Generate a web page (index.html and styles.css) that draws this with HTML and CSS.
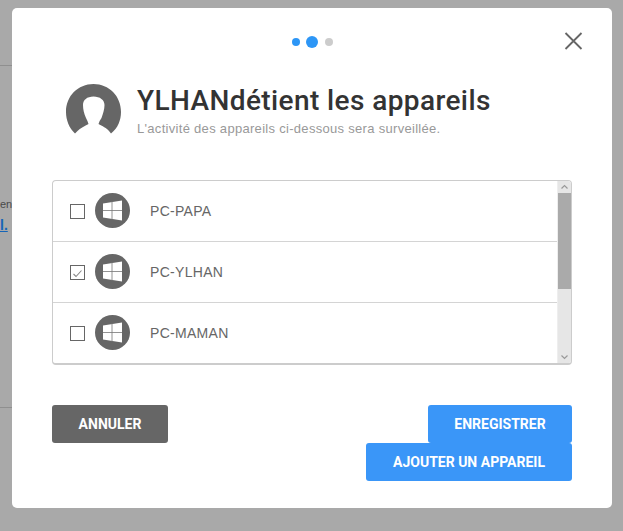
FILE: index.html
```html
<!DOCTYPE html>
<html>
<head>
    <title>Appareils</title>
    <meta name="viewport" content="width=device-width, initial-scale=1">
    <link rel="stylesheet" href="styles.css">
</head>
<body>
    <!-- page behind the overlay, only a sliver shows on the left -->
    <div class="behind">
        <div class="behind-line behind-line-top"></div>
        <div class="behind-text">en</div>
        <div class="behind-link">l.</div>
        <div class="behind-line behind-line-bottom"></div>
    </div>

    <div class="modal">
        <div class="modal-top">
            <div class="steps">
                <span class="dot dot-on"></span>
                <span class="dot dot-big"></span>
                <span class="dot dot-off"></span>
            </div>
            <svg class="close" width="19" height="18" viewBox="0 0 19 18">
                <path d="M1.5 1 L17.5 17 M17.5 1 L1.5 17" stroke="#666" stroke-width="1.8" fill="none"/>
            </svg>
        </div>

        <div class="header">
            <svg class="avatar" width="56" height="52" viewBox="0 0 56 52">
                <path fill="#666" d="M9 49.500 C3 44 0 36 0 28 C0 12 12 0 27.500 0 C43 0 55 12 55 28 C55 36 52 44 45 49.500 L43 47 C41 44 36 42 32.500 40 C33 38 34 36 35.500 34 C37 30 38.500 25 38.500 21 C38.500 16 34 12.500 27.500 12.500 C21 12.500 17 16 17 21 C17 25 18 30 20 34 C21 36 22 38 22.500 40 C19 42 14 44 11.500 47 Z"/>
            </svg>
            <div class="header-text">
                <h1>YLHANdétient les appareils</h1>
                <p>L'activité des appareils ci-dessous sera surveillée.</p>
            </div>
        </div>

        <div class="devices">
            <div class="device-list">
                <div class="device">
                    <span class="check"></span>
                    <svg class="win" width="35" height="35" viewBox="0 0 35 35">
                        <circle cx="17.500" cy="17.500" r="17.500" fill="#666"/>
                        <path fill="#fff" d="M8 10.500 L27 7.500 V27.500 L8 24.500 Z"/>
                        <path stroke="#777" stroke-width="0.800" d="M17 8 V27 M8 17.500 H27"/>
                    </svg>
                    <span class="device-name">PC-PAPA</span>
                </div>
                <div class="device">
                    <span class="check">
                        <svg width="13" height="13" viewBox="0 0 13 13">
                            <path d="M2.500 7 L5 9.500 L10.500 3.500" stroke="#888" stroke-width="1.100" fill="none"/>
                        </svg>
                    </span>
                    <svg class="win" width="35" height="35" viewBox="0 0 35 35">
                        <circle cx="17.500" cy="17.500" r="17.500" fill="#666"/>
                        <path fill="#fff" d="M8 10.500 L27 7.500 V27.500 L8 24.500 Z"/>
                        <path stroke="#777" stroke-width="0.800" d="M17 8 V27 M8 17.500 H27"/>
                    </svg>
                    <span class="device-name">PC-YLHAN</span>
                </div>
                <div class="device">
                    <span class="check"></span>
                    <svg class="win" width="35" height="35" viewBox="0 0 35 35">
                        <circle cx="17.500" cy="17.500" r="17.500" fill="#666"/>
                        <path fill="#fff" d="M8 10.500 L27 7.500 V27.500 L8 24.500 Z"/>
                        <path stroke="#777" stroke-width="0.800" d="M17 8 V27 M8 17.500 H27"/>
                    </svg>
                    <span class="device-name">PC-MAMAN</span>
                </div>
            </div>
            <div class="scrollbar">
                <svg class="arrow" width="13" height="12" viewBox="0 0 13 12">
                    <path d="M3.500 7.500 L6.500 4.500 L9.500 7.500" stroke="#999" stroke-width="1.200" fill="none"/>
                </svg>
                <div class="thumb"></div>
                <div class="track"></div>
                <svg class="arrow" width="13" height="12" viewBox="0 0 13 12">
                    <path d="M3.500 4.500 L6.500 7.500 L9.500 4.500" stroke="#999" stroke-width="1.200" fill="none"/>
                </svg>
            </div>
        </div>

        <div class="actions">
            <button type="button" class="btn btn-grey">ANNULER</button>
            <div class="actions-right">
                <button type="button" class="btn btn-blue btn-save">ENREGISTRER</button>
                <button type="button" class="btn btn-blue btn-add">AJOUTER UN APPAREIL</button>
            </div>
        </div>
    </div>
</body>
</html>
```

FILE: styles.css
```css
html, body { margin: 0; height: 100%; }
body {
    background: #a9a9a9;
    font-family: "Liberation Sans", Arial, sans-serif;
    overflow: hidden;
    padding: 8px 0 0 12px;
    box-sizing: border-box;
}

/* sliver of the page under the overlay */
.behind { position: absolute; left: 0; top: 0; width: 12px; height: 531px; overflow: hidden; }
.behind-line { position: absolute; left: 0; width: 12px; height: 1px; background: #8f8f8f; }
.behind-line-top { top: 65px; }
.behind-line-bottom { top: 407px; }
.behind-text { position: absolute; left: 0; top: 198px; font-size: 11px; color: #4a4a4a; }
.behind-link { position: absolute; left: 0; top: 217px; font-size: 14px; font-weight: bold; color: #1565b8; text-decoration: underline; }

.modal {
    position: relative;
    width: 600px;
    height: 500px;
    background: #fff;
    border-radius: 5px;
}

.modal-top { height: 76px; display: flex; justify-content: center; position: relative; }
.steps { display: flex; align-items: center; gap: 6.500px; height: 67px; }
.dot { display: block; width: 8px; height: 8px; border-radius: 50%; background: #2d96f6; }
.dot-big { width: 12px; height: 12px; }
.dot-off { background: #ccc; }
.close { position: absolute; left: 552px; top: 24px; }

.header { display: flex; gap: 15px; align-items: center; padding-left: 54px; height: 52px; }
.avatar { flex: none; }
h1 {
    margin: 0;
    font-family: Roboto, sans-serif;
    font-weight: 500;
    font-size: 28px;
    line-height: 34px;
    color: #333;
    letter-spacing: 0.4px;
}
.header-text p {
    margin: 3px 0 0 0;
    font-size: 13px;
    line-height: 16px;
    color: #999;
    letter-spacing: 0.3px;
}

.devices {
    display: flex;
    margin: 44px 0 0 40px;
    width: 520px;
    height: 185px;
    box-sizing: border-box;
    border: 1px solid #ccc;
    border-bottom-width: 2px;
    border-radius: 4px;
    overflow: hidden;
}
.device-list { flex: 1; }
.device {
    display: flex;
    align-items: center;
    height: 60px;
    padding-left: 17px;
    border-bottom: 1px solid #d4d4d4;
}
.device:last-child { border-bottom: none; }
.check {
    display: block;
    flex: none;
    width: 13px;
    height: 13px;
    border: 1px solid #666;
    margin-right: 10px;
}
.win { flex: none; margin-top: -2px; }
.device-name { margin-left: 20px; font-size: 14px; color: #666; letter-spacing: 0.3px; }

.scrollbar { display: flex; flex-direction: column; width: 13px; background: #e6e6e6; border-left: 1px solid #eee; }
.arrow { display: block; flex: none; }
.thumb { height: 96px; background: #aaa; }
.track { flex: 1; }

.actions { display: flex; justify-content: space-between; align-items: flex-start; margin: 40px 40px 0 40px; }
.actions-right { display: flex; flex-direction: column; align-items: flex-end; }
.btn {
    display: block;
    height: 38px;
    border: none;
    border-radius: 3px;
    padding: 0;
    font-family: Roboto, sans-serif;
    font-weight: 700;
    font-size: 14px;
    color: #fff;
}
.btn-grey { width: 116px; background: #666; }
.btn-blue { background: #3a96f8; }
.btn-save { width: 144px; }
.btn-add { width: 206px; }
```
